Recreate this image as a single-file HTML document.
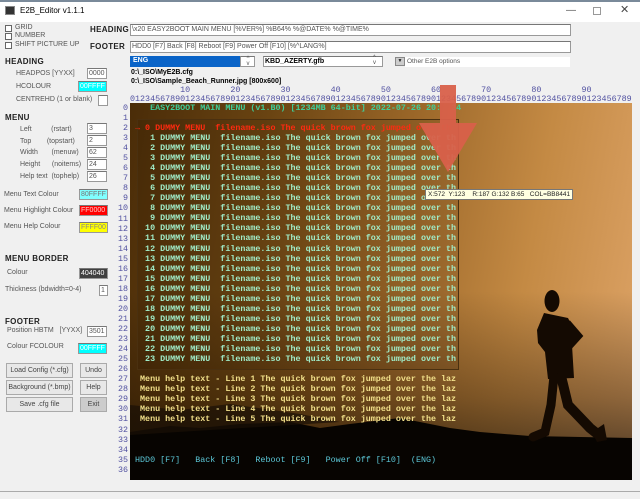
<!DOCTYPE html>
<html><head><meta charset="utf-8"><style>
*{margin:0;padding:0;box-sizing:border-box}
body{width:640px;height:499px;overflow:hidden;background:#f0f0f0;font-family:"Liberation Sans",sans-serif;font-size:7px;color:#222;position:relative}
.a{position:absolute;white-space:pre}
.b{font-weight:bold;font-size:8px;letter-spacing:.3px}
.in{position:absolute;background:#fff;border:1px solid #999;border-top-color:#777;font-size:7px;padding-left:1px;line-height:10px;color:#555}
.cb{position:absolute;width:7px;height:7px;border:1px solid #666;background:#fff}
.btn{position:absolute;background:#e8e8e8;border:1px solid #aaa;text-align:center;font-size:7px;line-height:13px;color:#444}
.m{position:absolute;font-family:"Liberation Mono",monospace;font-size:8.37px;line-height:10.05px;white-space:pre;font-weight:bold}
</style></head><body>
<div class="a" style="left:0;top:0;width:640px;height:2px;background:#7a8a9a"></div>
<div class="a" style="left:0;top:2px;width:640px;height:20px;background:#fff"></div>
<div class="a" style="left:5px;top:6px;width:10px;height:9px;background:#333;border:1px solid #888"></div>
<div class="a" style="left:20px;top:6px;font-size:8px;color:#000">E2B_Editor v1.1.1</div>
<div class="a" style="left:566px;top:5px;font-size:10px;color:#555">—</div>
<div class="a" style="left:593px;top:7px;width:8px;height:8px;border:1px solid #999"></div>
<div class="a" style="left:620px;top:3px;font-size:11px;color:#444">✕</div>

<div class="cb" style="left:5px;top:25px"></div><div class="a" style="left:15px;top:24px;color:#555">GRID</div>
<div class="cb" style="left:5px;top:33px"></div><div class="a" style="left:15px;top:32px;color:#555">NUMBER</div>
<div class="cb" style="left:5px;top:42px"></div><div class="a" style="left:15px;top:41px;color:#555">SHIFT PICTURE UP</div>
<div class="a b" style="left:90px;top:25px">HEADING</div>
<div class="a b" style="left:90px;top:42px">FOOTER</div>
<div class="in" style="left:130px;top:24px;width:441px;height:12px">\x20 EASY2BOOT MAIN MENU [%VER%] %B64% %@DATE% %@TIME%</div>
<div class="in" style="left:130px;top:41px;width:441px;height:12px">HDD0 [F7]  Back [F8]  Reboot [F9]  Power Off [F10]  [%^LANG%]</div>
<div class="a" style="left:130px;top:56px;width:110px;height:11px;background:#0a64c8;color:#fff;font-size:7px;padding:1px 3px;font-weight:bold">ENG</div>
<div class="in" style="left:240px;top:56px;width:15px;height:11px;font-size:6px;text-align:center;line-height:5px">^<br>v</div>
<div class="in" style="left:263px;top:56px;width:120px;height:11px;color:#000;font-weight:bold">KBD_AZERTY.gfb</div>
<div class="a" style="left:373px;top:56px;font-size:6px;line-height:5px;color:#555">^<br>v</div>
<div class="a" style="left:395px;top:57px;width:10px;height:9px;background:#ccc;border:1px solid #888;font-size:5px;text-align:center">▼</div>
<div class="a" style="left:405px;top:57px;width:165px;height:10px;background:#fff;font-size:6.5px;color:#555;padding-left:2px;line-height:10px">Other E2B options</div>
<div class="a" style="left:131px;top:69px;font-size:7px;color:#000;font-weight:bold">0:\_ISO\MyE2B.cfg</div>
<div class="a" style="left:131px;top:78px;font-size:7px;color:#000;font-weight:bold">0:\_ISO\Sample_Beach_Runner.jpg [800x600]</div>

<div class="a b" style="left:5px;top:57px">HEADING</div>
<div class="a" style="left:16px;top:70px;color:#555">HEADPOS [YYXX]</div><div class="in" style="left:87px;top:68px;width:20px;height:11px">0000</div>
<div class="a" style="left:16px;top:83px;color:#555">HCOLOUR</div><div class="in" style="left:78px;top:81px;width:29px;height:11px;background:#00ffff;color:#fff">00FFFF</div>
<div class="a" style="left:16px;top:96px;color:#555">CENTREHD (1 or blank)</div><div class="in" style="left:98px;top:95px;width:10px;height:11px"></div>
<div class="a b" style="left:5px;top:113px">MENU</div>
<div class="a" style="left:20px;top:126px;color:#555">Left          (rstart)</div><div class="in" style="left:87px;top:123px;width:20px;height:11px">3</div>
<div class="a" style="left:20px;top:138px;color:#555">Top        (topstart)</div><div class="in" style="left:87px;top:135px;width:20px;height:11px">2</div>
<div class="a" style="left:20px;top:149px;color:#555">Width       (menuw)</div><div class="in" style="left:87px;top:147px;width:20px;height:11px">62</div>
<div class="a" style="left:20px;top:161px;color:#555">Height      (noitems)</div><div class="in" style="left:87px;top:159px;width:20px;height:11px">24</div>
<div class="a" style="left:20px;top:173px;color:#555">Help text  (tophelp)</div><div class="in" style="left:87px;top:171px;width:20px;height:11px">26</div>
<div class="a" style="left:4px;top:191px;color:#555">Menu Text Colour</div><div class="in" style="left:79px;top:189px;width:29px;height:11px;background:#80ffff;color:#777">80FFFF</div>
<div class="a" style="left:4px;top:207px;color:#555">Menu Highlight Colour</div><div class="in" style="left:79px;top:205px;width:29px;height:11px;background:#ff0000;color:#fcc">FF0000</div>
<div class="a" style="left:4px;top:223px;color:#555">Menu Help Colour</div><div class="in" style="left:79px;top:222px;width:29px;height:11px;background:#ffff00;color:#888">FFFF00</div>
<div class="a b" style="left:5px;top:254px">MENU BORDER</div>
<div class="a" style="left:7px;top:269px;color:#555">Colour</div><div class="in" style="left:79px;top:268px;width:29px;height:11px;background:#404040;color:#fff">404040</div>
<div class="a" style="left:5px;top:286px;color:#555">Thickness (bdwidth=0-4)</div><div class="in" style="left:99px;top:285px;width:9px;height:11px">1</div>
<div class="a b" style="left:5px;top:317px">FOOTER</div>
<div class="a" style="left:7px;top:327px;color:#555">Position HBTM   [YYXX]</div><div class="in" style="left:87px;top:326px;width:20px;height:11px">3501</div>
<div class="a" style="left:7px;top:343px;color:#555">Colour FCOLOUR</div><div class="in" style="left:78px;top:343px;width:29px;height:11px;background:#00ffff;color:#fff">00FFFF</div>
<div class="btn" style="left:6px;top:363px;width:67px;height:15px">Load Config (*.cfg)</div>
<div class="btn" style="left:80px;top:363px;width:27px;height:15px">Undo</div>
<div class="btn" style="left:6px;top:380px;width:67px;height:15px">Background (*.bmp)</div>
<div class="btn" style="left:80px;top:380px;width:27px;height:15px">Help</div>
<div class="btn" style="left:6px;top:397px;width:67px;height:15px">Save .cfg file</div>
<div class="btn" style="left:80px;top:397px;width:27px;height:15px;background:#ccc">Exit</div>

<!-- ruler -->
<div class="m" style="left:130px;top:85px;color:#5050a0;font-weight:normal">          10        20        30        40        50        60        70        80        90</div>
<div class="m" style="left:130px;top:94px;color:#5050a0;font-weight:normal">0123456789012345678901234567890123456789012345678901234567890123456789012345678901234567890123456789</div>
<div class="m" style="left:114px;top:103px;color:#5050a0;font-weight:normal;text-align:right;width:14px">0
1
2
3
4
5
6
7
8
9
10
11
12
13
14
15
16
17
18
19
20
21
22
23
24
25
26
27
28
29
30
31
32
33
34
35
36</div>

<!-- image -->
<div class="a" style="left:130px;top:103px;width:502px;height:377px;overflow:hidden;background:linear-gradient(100deg,#4a2c08 0%,#6a4412 25%,#9a6628 50%,#c48a44 75%,#dea468 100%)">
<div class="a" style="left:0;top:0;width:502px;height:377px;background:linear-gradient(180deg,rgba(0,0,0,0) 0%,rgba(0,0,0,0) 50%,rgba(30,15,0,.4) 78%,rgba(0,0,0,.7) 100%)"></div>
<svg class="a" style="left:0;top:0" width="502" height="377" viewBox="130 103 502 377">
<path d="M130 432 L170 426 L200 428 L240 424 L290 422 L320 428 L350 424 L400 418 L450 428 L480 432 L530 436 L632 438 L632 480 L130 480 Z" fill="#070401"/>
<path d="M130 405 L180 410 L230 404 L300 414 L340 422 L130 435Z" fill="#1a0f05" opacity=".7"/>
<ellipse cx="552" cy="301" rx="7.5" ry="11" fill="#140a02"/>
<path d="M544 313 L568 318 L577 336 L572 345 L574 378 L548 379 L545 352 L538 343 L537 330 Z" fill="#140a02"/>
<path d="M568 322 L580 336 L570 347" stroke="#140a02" stroke-width="5" fill="none"/>
<path d="M561 376 L568 405 L590 428 L600 436" stroke="#140a02" stroke-width="10" fill="none" stroke-linecap="round"/>
<path d="M554 376 L551 405 L545 432 L533 437" stroke="#140a02" stroke-width="9" fill="none" stroke-linecap="round"/>
<path d="M604 424 L607 440 L597 442 L592 432Z" fill="#140a02"/>
</svg>
</div>
<div class="a" style="left:137px;top:119px;width:322px;height:251px;border:1px solid #4a3010;background:rgba(30,15,0,.12)"></div>

<div class="m" style="left:130px;top:103px;color:#3fcf9a">    EASY2BOOT MAIN MENU (v1.B0) [1234MB 64-bit] 2022-07-26 20:  24</div>
<div class="m" style="left:130px;top:123px;color:#ff2a10"> → 0 DUMMY MENU  filename.iso The quick brown fox jumped over th</div>
<div class="m" style="left:130px;top:133px;color:#a0ecc8">    1 DUMMY MENU  filename.iso The quick brown fox jumped over th
    2 DUMMY MENU  filename.iso The quick brown fox jumped over th
    3 DUMMY MENU  filename.iso The quick brown fox jumped over th
    4 DUMMY MENU  filename.iso The quick brown fox jumped over th
    5 DUMMY MENU  filename.iso The quick brown fox jumped over th
    6 DUMMY MENU  filename.iso The quick brown fox jumped over th
    7 DUMMY MENU  filename.iso The quick brown fox jumped over th
    8 DUMMY MENU  filename.iso The quick brown fox jumped over th
    9 DUMMY MENU  filename.iso The quick brown fox jumped over th
   10 DUMMY MENU  filename.iso The quick brown fox jumped over th
   11 DUMMY MENU  filename.iso The quick brown fox jumped over th
   12 DUMMY MENU  filename.iso The quick brown fox jumped over th
   13 DUMMY MENU  filename.iso The quick brown fox jumped over th
   14 DUMMY MENU  filename.iso The quick brown fox jumped over th
   15 DUMMY MENU  filename.iso The quick brown fox jumped over th
   16 DUMMY MENU  filename.iso The quick brown fox jumped over th
   17 DUMMY MENU  filename.iso The quick brown fox jumped over th
   18 DUMMY MENU  filename.iso The quick brown fox jumped over th
   19 DUMMY MENU  filename.iso The quick brown fox jumped over th
   20 DUMMY MENU  filename.iso The quick brown fox jumped over th
   21 DUMMY MENU  filename.iso The quick brown fox jumped over th
   22 DUMMY MENU  filename.iso The quick brown fox jumped over th
   23 DUMMY MENU  filename.iso The quick brown fox jumped over th</div>
<div class="m" style="left:130px;top:374px;color:#f2e08a">  Menu help text - Line 1 The quick brown fox jumped over the laz
  Menu help text - Line 2 The quick brown fox jumped over the laz
  Menu help text - Line 3 The quick brown fox jumped over the laz
  Menu help text - Line 4 The quick brown fox jumped over the laz
  Menu help text - Line 5 The quick brown fox jumped over the laz</div>
<div class="m" style="left:130px;top:455px;color:#5cc8d8;font-weight:normal"> HDD0 [F7]   Back [F8]   Reboot [F9]   Power Off [F10]  (ENG)</div>

<!-- arrow -->
<svg class="a" style="left:418px;top:85px" width="62" height="90" viewBox="418 85 62 90">
<path d="M440 85 L456 85 L456 123 L477 123 L448 172 L419 123 L440 123 Z" fill="#d8604a" opacity=".95"/>
</svg>
<div class="a" style="left:425px;top:189px;width:148px;height:11px;background:#ffffe1;border:1px solid #777;font-size:6.5px;line-height:9px;padding-left:2px;color:#222">X:572  Y:123    R:187 G:132 B:65   COL=BB8441</div>
<div class="a" style="left:0;top:491px;width:640px;height:1px;background:#aaa"></div>
</body></html>
